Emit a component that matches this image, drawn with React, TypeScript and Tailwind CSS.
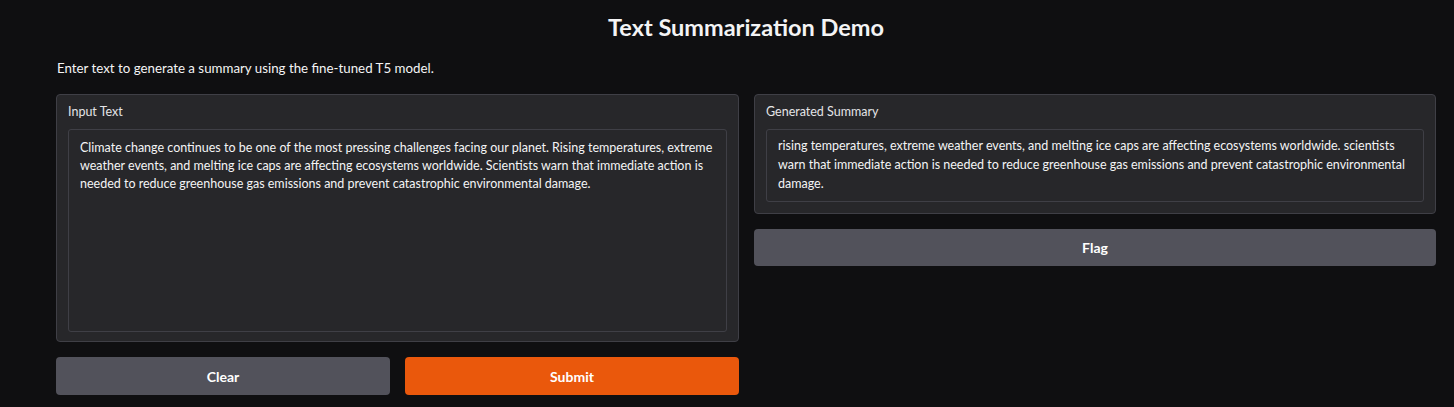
import React from "react";

const font = { fontFamily: "Lato, 'Noto Sans', sans-serif" };

export default function App() {
  return (
    <div className="w-[1454px] h-[407px] bg-[#0f0f11] text-[#f4f4f5] overflow-hidden" style={font}>
      <div className="pl-[56px] pr-[18px] pt-[14px] flex flex-col">
        <h1 className="text-center text-[23.5px] font-bold leading-[26px]">Text Summarization Demo</h1>
        <p className="mt-[19px] text-[13.3px] leading-[18px] pl-[1px]">Enter text to generate a summary using the fine-tuned T5 model.</p>
        <div className="mt-[17px] flex gap-[15px] items-start">
          <div className="w-[683px] shrink-0 flex flex-col gap-[15px]">
            <div className="h-[248px] bg-[#27272a] border border-[#3f3f46] rounded-[4px] px-[11px] pt-[9px] pb-[9px] flex flex-col">
              <div className="text-[12.5px] leading-[16px] text-[#e4e4e7]">Input Text</div>
              <div className="mt-[9px] flex-1 border border-[#3f3f46] rounded-[3px] px-[11px] pt-[9px] text-[12.5px] leading-[18px]">
                <div className="whitespace-nowrap">Climate change continues to be one of the most pressing challenges facing our planet. Rising temperatures, extreme</div>
                <div className="whitespace-nowrap">weather events, and melting ice caps are affecting ecosystems worldwide. Scientists warn that immediate action is</div>
                <div className="whitespace-nowrap">needed to reduce greenhouse gas emissions and prevent catastrophic environmental damage.</div>
              </div>
            </div>
            <div className="flex gap-[15px]">
              <button className="flex-1 h-[38px] rounded-[4px] bg-[#52525b] text-white font-bold text-[14px]">Clear</button>
              <button className="flex-1 h-[38px] rounded-[4px] bg-[#ea580c] text-white font-bold text-[14px]">Submit</button>
            </div>
          </div>
          <div className="w-[682px] shrink-0 flex flex-col gap-[15px]">
            <div className="bg-[#27272a] border border-[#3f3f46] rounded-[4px] px-[11px] pt-[9px] pb-[11px] flex flex-col">
              <div className="text-[12.5px] leading-[16px] text-[#e4e4e7]">Generated Summary</div>
              <div className="mt-[9px] h-[73px] border border-[#3f3f46] rounded-[3px] px-[11px] pt-[6px] text-[12.5px] leading-[19px]">
                <div className="whitespace-nowrap">rising temperatures, extreme weather events, and melting ice caps are affecting ecosystems worldwide. scientists</div>
                <div className="whitespace-nowrap">warn that immediate action is needed to reduce greenhouse gas emissions and prevent catastrophic environmental</div>
                <div className="whitespace-nowrap">damage.</div>
              </div>
            </div>
            <button className="h-[37px] rounded-[4px] bg-[#52525b] text-white font-bold text-[14px]">Flag</button>
          </div>
        </div>
      </div>
    </div>
  );
}
